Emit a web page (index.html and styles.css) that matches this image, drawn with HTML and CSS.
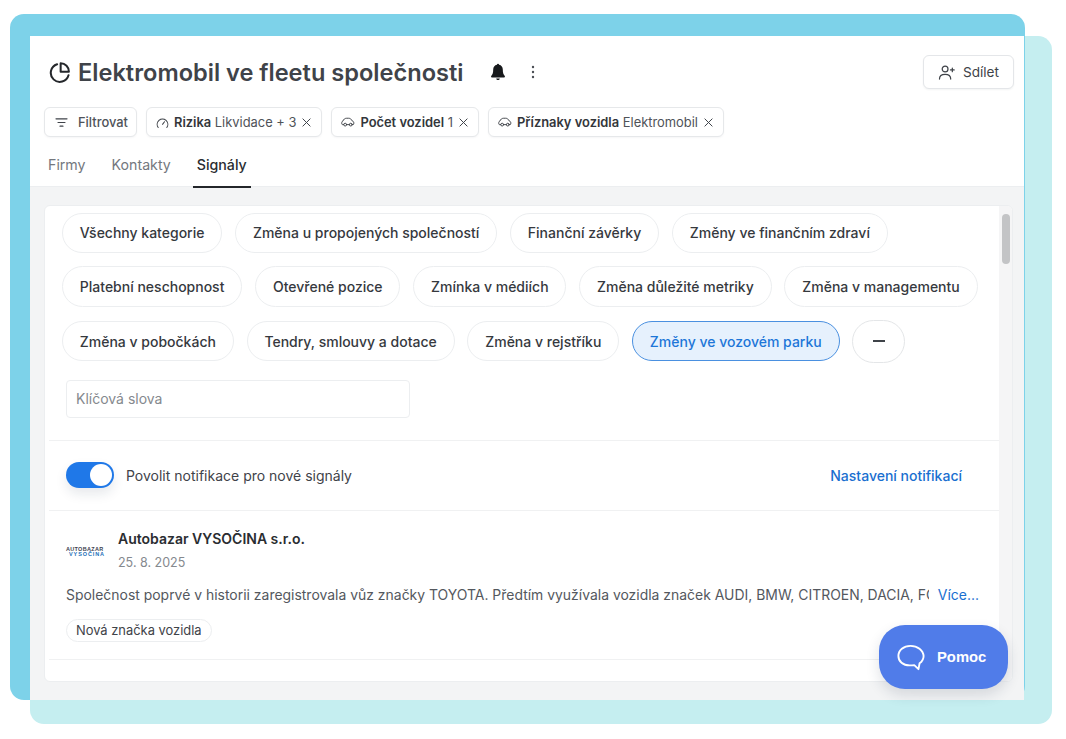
FILE: index.html
```html
<!DOCTYPE html>
<html lang="cs">
<head>
    <meta charset="UTF-8">
    <meta name="viewport" content="width=device-width, initial-scale=1.0">
    <title>Elektromobil ve fleetu společnosti</title>
    <link rel="stylesheet" href="styles.css">
</head>
<body>
    <div class="stage">
        <!-- barevne ramecky za aplikaci -->
        <div class="frame frame-light"></div>
        <div class="frame frame-dark"></div>

        <div class="app">
            <header class="head">
                <div class="title-row">
                    <svg class="title-icon" viewBox="0 0 24 24" fill="none" stroke="#24272b" stroke-width="2.1" stroke-linecap="round" stroke-linejoin="round">
                        <path d="M9.5 3.4a9.4 9.4 0 1 0 11.9 11.4"/>
                        <path d="M13.2 2.4a8.6 8.6 0 0 1 8.6 8.8h-8.6z"/>
                    </svg>
                    <h1 class="title">Elektromobil ve fleetu společnosti</h1>
                    <svg class="bell" viewBox="0 0 16 18" fill="#17191c">
                        <path d="M8 .8c.6 0 1 .4 1.100 1 2.300.5 3.700 2.400 3.700 4.800 0 3.200.6 5 2 6.500.4.500.1 1.300-.6 1.300H1.800c-.7 0-1-.8-.6-1.300 1.400-1.500 2-3.300 2-6.500 0-2.400 1.400-4.300 3.700-4.800.1-.6.500-1 1.100-1z"/>
                        <path d="M6.200 15.400h3.600c-.2 1-.9 1.700-1.800 1.700s-1.600-.7-1.800-1.700z"/>
                    </svg>
                    <svg class="dots" viewBox="0 0 4 14" fill="#4a4e54">
                        <circle cx="2" cy="2" r="1.200"/>
                        <circle cx="2" cy="7" r="1.200"/>
                        <circle cx="2" cy="12" r="1.200"/>
                    </svg>
                    <button class="share">
                        <svg viewBox="0 0 18 16" fill="none" stroke="#3f4349" stroke-width="1.300" stroke-linecap="round">
                            <circle cx="7.500" cy="4.300" r="3.100"/>
                            <path d="M1.500 15c0-3.300 2.600-5 6-5s6 1.700 6 5"/>
                            <path d="M13.200 5.200h4M15.200 3.200v4"/>
                        </svg>
                        Sdílet
                    </button>
                </div>

                <div class="filters">
                    <button class="chip chip-filter">
                        <svg class="chip-lines" viewBox="0 0 14 12" fill="none" stroke="#3f4349" stroke-width="1.300" stroke-linecap="round">
                            <path d="M1 2h12M3.200 6h7.600M5.400 10h3.200"/>
                        </svg>
                        Filtrovat
                    </button>
                    <div class="chip">
                        <svg class="chip-icon" viewBox="0 0 14 12" fill="none" stroke="#3f4349" stroke-width="1.100" stroke-linecap="round">
                            <path d="M2.300 11.500a5.800 5.800 0 1 1 9.400 0"/>
                            <path d="M7 8l2.200-2.800"/>
                        </svg>
                        <span><b>Rizika</b> Likvidace + 3</span>
                        <svg class="chip-x" viewBox="0 0 10 10" stroke="#3f4349" stroke-width="1.100" stroke-linecap="round"><path d="M1 1l8 8M9 1l-8 8"/></svg>
                    </div>
                    <div class="chip">
                        <svg class="chip-car" viewBox="0 0 16 11" fill="none" stroke="#3f4349" stroke-width="1.100" stroke-linecap="round" stroke-linejoin="round">
                            <path d="M3 8.500H1.800c-.5 0-.9-.4-.9-.9V6c0-.8.5-1.300 1.200-1.500C3 2.500 4.200 1.200 6.500 1.200h2.200c1.900 0 3 1 4 3l1 .5c.6.3.9.8.9 1.400v1.500c0 .5-.4.9-.9.9H13"/>
                            <circle cx="4.800" cy="8.500" r="1.600"/>
                            <circle cx="11.200" cy="8.500" r="1.600"/>
                            <path d="M6.400 8.500h3.200"/>
                        </svg>
                        <span><b>Počet vozidel</b> 1</span>
                        <svg class="chip-x" viewBox="0 0 10 10" stroke="#3f4349" stroke-width="1.100" stroke-linecap="round"><path d="M1 1l8 8M9 1l-8 8"/></svg>
                    </div>
                    <div class="chip">
                        <svg class="chip-car" viewBox="0 0 16 11" fill="none" stroke="#3f4349" stroke-width="1.100" stroke-linecap="round" stroke-linejoin="round">
                            <path d="M3 8.500H1.800c-.5 0-.9-.4-.9-.9V6c0-.8.5-1.300 1.200-1.500C3 2.500 4.200 1.200 6.500 1.200h2.200c1.900 0 3 1 4 3l1 .5c.6.3.9.8.9 1.400v1.500c0 .5-.4.9-.9.9H13"/>
                            <circle cx="4.800" cy="8.500" r="1.600"/>
                            <circle cx="11.200" cy="8.500" r="1.600"/>
                            <path d="M6.400 8.500h3.200"/>
                        </svg>
                        <span><b>Příznaky vozidla</b> Elektromobil</span>
                        <svg class="chip-x" viewBox="0 0 10 10" stroke="#3f4349" stroke-width="1.100" stroke-linecap="round"><path d="M1 1l8 8M9 1l-8 8"/></svg>
                    </div>
                </div>

                <nav class="tabs">
                    <a class="tab">Firmy</a>
                    <a class="tab">Kontakty</a>
                    <a class="tab tab-active">Signály</a>
                </nav>
            </header>

            <main class="content">
                <section class="card">
                    <div class="card-body">
                        <div class="pills">
                            <button class="pill">Všechny kategorie</button>
                            <button class="pill">Změna u propojených společností</button>
                            <button class="pill">Finanční závěrky</button>
                            <button class="pill">Změny ve finančním zdraví</button>
                            <button class="pill">Platební neschopnost</button>
                            <button class="pill">Otevřené pozice</button>
                            <button class="pill">Zmínka v médiích</button>
                            <button class="pill">Změna důležité metriky</button>
                            <button class="pill">Změna v managementu</button>
                            <button class="pill">Změna v pobočkách</button>
                            <button class="pill">Tendry, smlouvy a dotace</button>
                            <button class="pill">Změna v rejstříku</button>
                            <button class="pill pill-active">Změny ve vozovém parku</button>
                            <button class="pill-less"><span></span></button>
                        </div>

                        <input class="keywords" type="text" placeholder="Klíčová slova">

                        <div class="notify">
                            <div class="switch"><span></span></div>
                            <span class="notify-label">Povolit notifikace pro nové signály</span>
                            <a class="notify-link">Nastavení notifikací</a>
                        </div>

                        <article class="signal">
                            <div class="signal-head">
                                <div class="logo">
                                    <span class="logo-top">AUTOBAZAR</span>
                                    <span class="logo-bottom">VYSOČINA</span>
                                </div>
                                <div>
                                    <div class="signal-name">Autobazar VYSOČINA s.r.o.</div>
                                    <div class="signal-date">25. 8. 2025</div>
                                </div>
                            </div>
                            <div class="signal-text">
                                <p>Společnost poprvé v historii zaregistrovala vůz značky TOYOTA. Předtím využívala vozidla značek AUDI, BMW, CITROEN, DACIA, FO</p>
                                <a>Více...</a>
                            </div>
                            <span class="tag">Nová značka vozidla</span>
                        </article>
                    </div>
                    <div class="scrollbar"><span></span></div>
                </section>
            </main>
        </div>

        <button class="help">
            <svg viewBox="0 0 30 28" fill="none" stroke="#fff" stroke-width="2" stroke-linejoin="round">
                <path d="M14.500 1.500C7 1.500 1.500 6 1.500 12.300c0 6 5 10.200 12 10.200 2 0 3.500-.1 5-.3l4.500 4.300 1.200-6.300c2.700-2 4.300-4.700 4.300-7.900C28 6 22 1.500 14.500 1.500z"/>
            </svg>
            Pomoc
        </button>
    </div>
</body>
</html>
```

FILE: styles.css
```css
* {
    box-sizing: border-box;
}

body {
    margin: 0;
    background: #fff;
    font-family: Inter, 'Noto Sans', sans-serif;
    color: #33363b;
}

button {
    font-family: inherit;
    background: #fff;
    cursor: pointer;
}

.stage {
    position: relative;
    width: 1066px;
    height: 739px;
    overflow: hidden;
    padding: 36px 0 0 30px;
}

.frame {
    position: absolute;
}

.frame-dark {
    left: 10px;
    top: 14px;
    width: 1015px;
    height: 686px;
    background: #7dd2e9;
    border-radius: 14px;
}

.frame-light {
    left: 30px;
    top: 36px;
    width: 1022px;
    height: 688px;
    background: #c5eef0;
    border-radius: 14px;
}

.app {
    position: relative;
    width: 994px;
    height: 664px;
    background: #f3f4f5;
    display: flex;
    flex-direction: column;
}

.head {
    background: #fff;
    height: 151px;
    padding: 19px 10px 0 14px;
    border-bottom: 1px solid #eceef0;
}

.title-row {
    display: flex;
    align-items: center;
    height: 34px;
    padding-left: 4px;
}

.title-icon {
    width: 23px;
    height: 23px;
    margin-right: 7px;
}

.title {
    margin: 0;
    font-size: 23.6px;
    font-weight: 600;
    color: #3f4349;
}

.bell {
    width: 16px;
    height: 18px;
    margin-left: 27px;
}

.dots {
    width: 4px;
    height: 14px;
    margin-left: 25px;
}

.share {
    margin-left: auto;
    width: 91px;
    height: 34px;
    border: 1px solid #e4e6e9;
    border-radius: 6px;
    box-shadow: 0 1px 2px rgba(20, 30, 40, 0.05);
    display: flex;
    align-items: center;
    justify-content: center;
    gap: 8px;
    font-size: 13.6px;
    font-weight: 400;
    color: #3f4349;
}

.share svg {
    width: 17px;
    height: 15px;
}

.filters {
    display: flex;
    gap: 9px;
    margin-top: 18px;
}

.chip {
    height: 30px;
    display: flex;
    align-items: center;
    gap: 5px;
    padding: 0 10px 0 9px;
    border: 1px solid #e6e8ea;
    border-radius: 6px;
    background: #fff;
    box-shadow: 0 1px 2px rgba(20, 30, 40, 0.04);
    font-size: 12.9px;
    color: #4f5359;
}

.chip b {
    font-weight: 600;
    color: #33363b;
}

.chip-filter {
    gap: 10px;
    font-weight: 500;
    padding: 0 8px 0 10px;
}

.chip-lines {
    width: 13px;
    height: 11px;
}

.chip-icon {
    width: 13px;
    height: 11px;
}

.chip-car {
    width: 14px;
    height: 10px;
}

.chip-x {
    width: 9px;
    height: 9px;
    margin-left: 1px;
}

.tabs {
    display: flex;
    gap: 18px;
    margin-top: 15px;
}

.tab {
    height: 36px;
    padding: 4px 4px 0;
    font-size: 14.2px;
    color: #74787e;
}

.tab-active {
    color: #2a2d31;
    font-weight: 500;
    border-bottom: 2px solid #23262a;
}

.content {
    flex: 1;
    padding: 18px 11px 17px 14px;
}

.card {
    height: 477px;
    background: #fff;
    border-radius: 6px;
    border: 1px solid #eceef0;
    display: flex;
    overflow: hidden;
}

.card-body {
    flex: 1;
    min-width: 0;
    padding: 6.8px 0 0;
}

.scrollbar {
    width: 13px;
    background: #f5f5f6;
    padding: 8px 2px 0 3px;
}

.scrollbar span {
    display: block;
    height: 50px;
    background: #c3c4c6;
    border-radius: 4px;
}

.pills {
    display: flex;
    flex-wrap: wrap;
    align-items: center;
    gap: 13px 12.9px;
    padding: 0 17px;
}

.pill {
    height: 40.4px;
    padding: 0 16.8px;
    border: 1px solid #eceef0;
    border-radius: 21px;
    font-size: 14px;
    font-weight: 450;
    color: #36393e;
}

.pill-active {
    background: #e6f1fd;
    border-color: #4a90e0;
    color: #1d76d8;
}

.pill-less {
    width: 53px;
    height: 43px;
    border: 1px solid #e4e6e8;
    border-radius: 22px;
    display: flex;
    align-items: center;
    justify-content: center;
}

.pill-less span {
    width: 12px;
    height: 2px;
    background: #3f4349;
}

.keywords {
    display: block;
    width: 344px;
    height: 38px;
    margin: 17.4px 0 0 21px;
    padding: 0 9px;
    border: 1px solid #eceef0;
    border-radius: 4px;
    font-family: inherit;
    font-size: 14px;
}

.keywords::placeholder {
    color: #85898e;
}

.notify {
    display: flex;
    align-items: center;
    height: 71px;
    margin: 22px 0 0 4px;
    padding: 0 37px 0 17px;
    border-top: 1px solid #f0f1f2;
    border-bottom: 1px solid #f0f1f2;
}

.switch {
    width: 48px;
    height: 26px;
    padding: 2px;
    border-radius: 13px;
    background: #1f78e8;
    box-shadow: 0 6px 12px rgba(20, 40, 70, 0.10);
    display: flex;
    justify-content: flex-end;
}

.switch span {
    width: 22px;
    height: 22px;
    border-radius: 50%;
    background: #fff;
}

.notify-label {
    margin-left: 12px;
    font-size: 14px;
    color: #3f4349;
}

.notify-link {
    margin-left: auto;
    font-size: 14px;
    font-weight: 500;
    color: #1a6fd0;
}

.signal {
    margin-left: 4px;
    padding: 18px 20px 17px 17px;
    border-bottom: 1px solid #f0f1f2;
}

.signal-head {
    display: flex;
    align-items: center;
    gap: 13px;
}

.logo {
    width: 39px;
    display: flex;
    flex-direction: column;
    align-items: flex-start;
    font-family: 'Liberation Sans', sans-serif;
    font-weight: 700;
    font-size: 5.5px;
    line-height: 5px;
    padding-top: 3px;
}

.logo-top {
    color: #3d4250;
    letter-spacing: 0.3px;
}

.logo-bottom {
    color: #1c6fb8;
    letter-spacing: 0.9px;
    padding-left: 3px;
}

.signal-name {
    font-size: 14px;
    font-weight: 600;
    line-height: 20px;
    color: #2a2d31;
}

.signal-date {
    margin-top: 4px;
    font-size: 12.5px;
    line-height: 20px;
    color: #85898e;
}

.signal-text {
    display: flex;
    gap: 9px;
    margin-top: 12px;
    font-size: 13.95px;
    line-height: 20px;
}

.signal-text p {
    margin: 0;
    flex: 1;
    min-width: 0;
    white-space: nowrap;
    overflow: hidden;
    color: #54585e;
}

.signal-text a {
    color: #1a6fd0;
}

.tag {
    display: inline-block;
    margin-top: 14px;
    height: 23px;
    padding: 0 9px;
    border: 1px solid #eceef0;
    border-radius: 12px;
    font-size: 12.9px;
    line-height: 21px;
    color: #3f4349;
}

.help {
    position: absolute;
    left: 879px;
    top: 625px;
    width: 129px;
    height: 64px;
    border: none;
    border-radius: 26px;
    background: #507ce9;
    box-shadow: 0 6px 14px rgba(30, 40, 70, 0.14);
    color: #fff;
    font-family: 'Liberation Sans', sans-serif;
    font-size: 14.8px;
    font-weight: 700;
    display: flex;
    align-items: center;
    gap: 12px;
    padding: 0 0 0 18px;
}

.help svg {
    width: 28px;
    height: 27px;
}
```
